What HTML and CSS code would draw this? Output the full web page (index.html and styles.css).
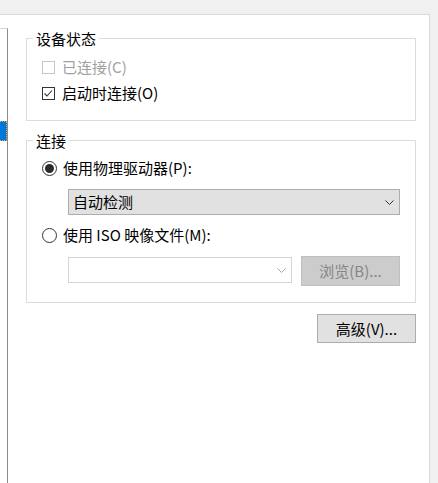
FILE: index.html
```html
<!DOCTYPE html>
<html lang="zh-CN">
<head>
<meta charset="utf-8">
<title>CD/DVD</title>
<link rel="stylesheet" href="styles.css">
</head>
<body>
<div class="topband"></div>
<div class="page">
  <div class="sheet">
    <div class="list">
      <div class="list-item selected"></div>
    </div>
    <div class="content">
      <fieldset class="group group-status">
        <legend>设备状态</legend>
        <div class="row check-row disabled">
          <span class="checkbox"></span>
          <span class="label">已连接(C)</span>
        </div>
        <div class="row check-row">
          <span class="checkbox checked">
            <svg width="13" height="13" viewBox="0 0 13 13"><path d="M2.5 6.5 L5 9 L10 3.5" fill="none" stroke="#333" stroke-width="1.1"/></svg>
          </span>
          <span class="label">启动时连接(O)</span>
        </div>
      </fieldset>

      <fieldset class="group group-conn">
        <legend>连接</legend>
        <div class="row radio-row">
          <span class="radio checked"><span class="dot"></span></span>
          <span class="label">使用物理驱动器(P):</span>
        </div>
        <div class="select">
          <span class="select-text">自动检测</span>
          <svg class="chevron" width="9" height="5" viewBox="0 0 9 5"><path d="M0.5 0.5 L4.5 4.5 L8.5 0.5" fill="none" stroke="#333" stroke-width="1"/></svg>
        </div>
        <div class="row radio-row">
          <span class="radio"></span>
          <span class="label">使用 ISO 映像文件(M):</span>
        </div>
        <div class="iso-row">
          <div class="combo disabled">
            <svg class="chevron" width="9" height="5" viewBox="0 0 9 5"><path d="M0.5 0.5 L4.5 4.5 L8.5 0.5" fill="none" stroke="#a8a8a8" stroke-width="1"/></svg>
          </div>
          <div class="btn btn-disabled">浏览(B)...</div>
        </div>
      </fieldset>

      <div class="actions">
        <div class="btn">高级(V)...</div>
      </div>
    </div>
  </div>
</div>
</body>
</html>
```

FILE: styles.css
```css
* { box-sizing: border-box; }

html, body {
  margin: 0;
  padding: 0;
}

body {
  width: 438px;
  height: 483px;
  overflow: hidden;
  background: #f0f0f0;
  font-family: "Noto Sans CJK SC", "Noto Sans", sans-serif;
  font-size: 15px;
  color: #000;
}

.topband {
  height: 14px;
}

.page {
  display: flex;
  height: 469px;
}

.sheet {
  width: 430px;
  height: 469px;
  background: #fff;
  border-top: 1px solid #d9d9d9;
  border-right: 1px solid #d9d9d9;
  display: flex;
}

.list {
  width: 8px;
  margin-top: 13px;
  border-top: 1px solid #d5d5d5;
  border-right: 1px solid #8c8c8c;
  background: #fff;
}

.list-item.selected {
  margin-top: 92px;
  height: 20px;
  background: #0078d7;
  border: 1px dotted #f0a050;
  border-left: none;
}

.content {
  flex: 1;
  padding: 15px 13px 0 18px;
}

.group {
  margin: 0;
  padding: 0;
  border: 1px solid #dcdcdc;
  min-width: 0;
}

.group legend {
  margin-left: 6px;
  padding: 0 3px;
  line-height: 17px;
  height: 17px;
}

.group-status {
  padding: 7px 0 14px;
}

.group-conn {
  margin-top: 11px;
  padding: 6px 0 16px;
}

.row {
  display: flex;
  align-items: center;
  height: 26px;
  padding-left: 15px;
  line-height: 20px;
}

.check-row { gap: 7px; }
.radio-row { gap: 6px; }

.checkbox {
  width: 13px;
  height: 13px;
  border: 1px solid #333;
  background: #fff;
  display: flex;
  align-items: center;
  justify-content: center;
  position: relative;
}

.checkbox svg {
  position: absolute;
  left: -1px;
  top: -1px;
}

.disabled .checkbox {
  border-color: #c6c6c6;
}

.disabled .label {
  color: #a0a0a0;
}

.radio {
  width: 15px;
  height: 15px;
  border: 1px solid #333;
  border-radius: 50%;
  background: #fff;
  display: flex;
  align-items: center;
  justify-content: center;
}

.radio .dot {
  width: 9px;
  height: 9px;
  border-radius: 50%;
  background: #2b2b2b;
}

.select {
  margin: 8px 15px 0 41px;
  height: 26px;
  border: 1px solid #adadad;
  background: #e1e1e1;
  display: flex;
  align-items: center;
  justify-content: space-between;
  padding: 0 5px 0 4px;
  line-height: 20px;
}

.group-conn .row:nth-of-type(2),
.group-conn .select + .row {
  margin-top: 7px;
}

.iso-row {
  margin: 8px 15px 0 41px;
  display: flex;
  gap: 9px;
  align-items: flex-start;
}

.combo {
  width: 224px;
  height: 26px;
  margin-top: 1px;
  border: 1px solid #d4d4d4;
  background: #fff;
  display: flex;
  align-items: center;
  justify-content: flex-end;
  padding-right: 5px;
}

.btn {
  width: 99px;
  height: 30px;
  border: 1px solid #adadad;
  background: #e1e1e1;
  display: flex;
  align-items: center;
  justify-content: center;
  line-height: 20px;
}

.btn-disabled {
  background: #cccccc;
  border-color: #bfbfbf;
  color: #858585;
}

.actions {
  display: flex;
  justify-content: flex-end;
  margin-top: 11px;
}

.actions .btn {
  height: 29px;
}
```
